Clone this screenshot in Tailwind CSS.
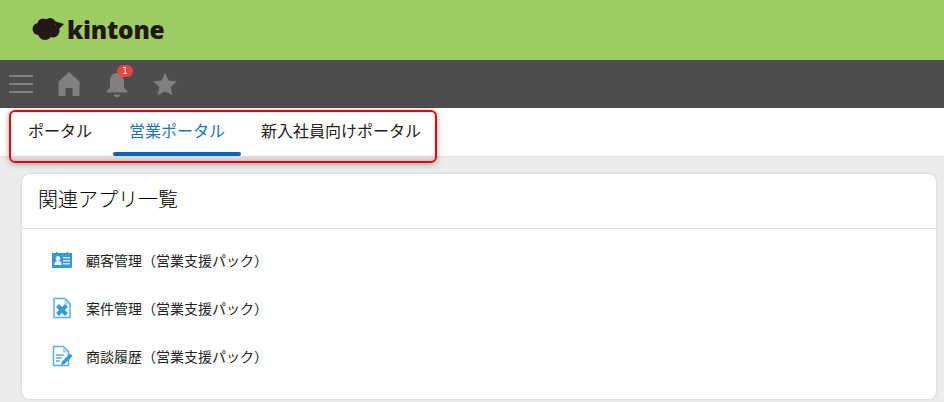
<!DOCTYPE html>
<html lang="ja">
<head>
    <meta charset="UTF-8">
    <title>kintone</title>
    <script src="https://cdn.jsdelivr.net/npm/@tailwindcss/browser@4"></script>
</head>
<body class="relative h-[402px] overflow-hidden bg-[#ececec] font-['Noto_Sans_CJK_JP',sans-serif] text-[#222]">
    <!-- logo -->
    <header class="flex h-[60px] items-center bg-[#9ccc63] pl-[32px]">
        <svg class="mb-[2px] h-[24px] w-[33px]" viewBox="0 0 33 24" fill="#231815">
            <circle cx="6.500" cy="12" r="6"/>
            <circle cx="11" cy="7" r="5.500"/>
            <circle cx="18" cy="6.500" r="5.500"/>
            <circle cx="13" cy="16" r="7"/>
            <circle cx="21" cy="14" r="6.500"/>
            <path d="M22 4l10 3-6 6z"/>
        </svg>
        <span class="ml-[2px] font-['Open_Sans',sans-serif] text-[24.500px] font-extrabold leading-none tracking-[-0.2px] text-[#231815]">kintone</span>
    </header>

    <!-- toolbar -->
    <nav class="flex h-[48px] items-center bg-[#4d4d4d] text-[#808080]">
        <div class="ml-[9px] flex w-[24px] flex-col gap-[6px]">
            <span class="h-[2px] bg-[#808080]"></span>
            <span class="h-[2px] bg-[#808080]"></span>
            <span class="h-[2px] bg-[#808080]"></span>
        </div>
        <svg class="ml-[24px] h-[24px] w-[24px]" viewBox="0 0 24 24" fill="currentColor">
            <path d="M12 0L1.500 9.500V23a1 1 0 0 0 1 1h6v-8h7v8h6a1 1 0 0 0 1-1V9.500z"/>
        </svg>
        <div class="relative ml-[24px] h-[24px] w-[24px]">
            <svg class="h-[26px] w-[24px]" viewBox="0 0 24 26" fill="currentColor">
                <path d="M12 1c-4.500 0-7 3.500-7 8v5c0 2-1.500 3.500-3.500 5v1.500h21V19c-2-1.500-3.500-3-3.500-5V9c0-4.500-2.500-8-7-8z"/>
                <path d="M8.500 22.500h7c-.5 1.800-2 2.800-3.500 2.800s-3-1-3.500-2.800z"/>
            </svg>
            <span class="absolute left-[12px] top-[-7px] flex h-[12px] w-[16px] items-center justify-center rounded-full bg-[#e9463f] font-['DejaVu_Sans',sans-serif] text-[9px] leading-none text-white">1</span>
        </div>
        <svg class="ml-[24px] h-[24px] w-[24px]" viewBox="0 0 24 24" fill="currentColor">
            <path d="M12 .8l3.500 7.600 8.200 1-6 5.700 1.600 8.200L12 19.200l-7.300 4.100 1.600-8.200-6-5.700 8.200-1z"/>
        </svg>
    </nav>

    <!-- tabs -->
    <div class="flex h-[49px] items-start border-b border-[#e3e3e3] bg-white pl-[13px] text-[16px]">
        <div class="flex h-[48px] items-center pb-[4px] pl-[15px] pr-[21px]">ポータル</div>
        <div class="relative flex h-[48px] items-center px-[16px] pb-[4px] text-[#1a73c8]">
            営業ポータル
            <span class="absolute bottom-0 left-0 right-0 h-[4px] rounded-full bg-[#0066c4]"></span>
        </div>
        <div class="flex h-[48px] items-center px-[20px] pb-[4px]">新入社員向けポータル</div>
    </div>

    <!-- card -->
    <main class="ml-[22px] mr-[8px] mt-[17px] h-[225px] rounded-[8px] bg-white shadow-[0_0_3px_rgba(0,0,0,0.15)]">
        <h2 class="flex h-[55px] items-center border-b border-[#e3e3e3] pb-[4px] pl-[16px] text-[20px] font-light text-[#000]">関連アプリ一覧</h2>
        <ul class="pl-[29px] pt-[7px] text-[14px]">
            <li class="flex h-[48px] items-center gap-[13px]">
                <svg class="h-[22px] w-[22px]" viewBox="0 0 22 22">
                    <path fill="#3498db" d="M1 4h4V3h1.500v1h9V3H17v1h4v15H1z"/>
                    <circle cx="7" cy="9.500" r="2.300" fill="#fff"/>
                    <path fill="#fff" d="M3.500 16v-1.500c0-1.500 1.500-2.500 3.500-2.500s3.500 1 3.500 2.500V16z"/>
                    <path fill="#cfe8f8" d="M12 8h7v1.500h-7zM12 11h7v1.500h-7zM12 14h7v1.500h-7z"/>
                </svg>
                <span>顧客管理（営業支援パック）</span>
            </li>
            <li class="flex h-[48px] items-center gap-[13px]">
                <svg class="h-[22px] w-[22px]" viewBox="0 0 22 22">
                    <path fill="none" stroke="#5aaee3" stroke-width="1.500" d="M3 1.500h11l5 5v14H3z"/>
                    <path fill="#a9d5f1" d="M13.500 1.500v6H19z"/>
                    <path fill="none" stroke="#3498db" stroke-width="4" d="M6.500 8.500l9 9M15.500 8.500l-9 9"/>
                </svg>
                <span>案件管理（営業支援パック）</span>
            </li>
            <li class="flex h-[48px] items-center gap-[13px]">
                <svg class="h-[22px] w-[22px]" viewBox="0 0 22 22">
                    <path fill="none" stroke="#5aaee3" stroke-width="1.500" d="M2.500 1.500h10l5 5v14h-15z"/>
                    <path fill="#a9d5f1" d="M12 1.500v6h5.500z"/>
                    <path stroke="#5aaee3" stroke-width="1.500" d="M5 10h8M5 13h6M5 16h4"/>
                    <path fill="#3498db" d="M19 8.500l2.500 2.500-8 8-3.500 1 1-3.500z"/>
                </svg>
                <span>商談履歴（営業支援パック）</span>
            </li>
        </ul>
    </main>

    <!-- red highlight around the tabs -->
    <div class="absolute left-[9px] top-[110px] h-[53px] w-[428px] rounded-[6px] border-2 border-[#f0000f] shadow-[0_1px_6px_rgba(0,0,0,0.35),inset_0_-5px_6px_-3px_rgba(0,0,0,0.2)]"></div>
</body>
</html>
